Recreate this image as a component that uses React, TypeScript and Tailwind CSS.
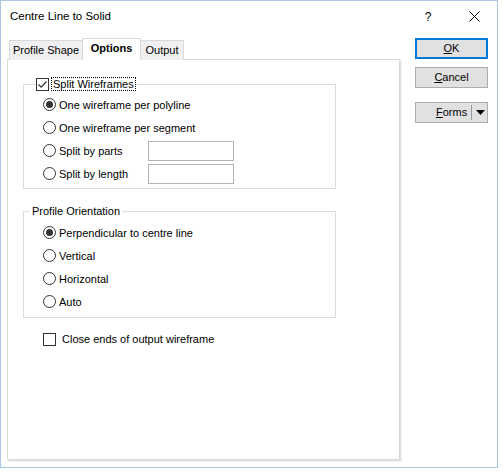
import type { ReactNode } from 'react';

function Radio({ checked }: { checked?: boolean }) {
  return (
    <span className="flex h-[13px] w-[13px] shrink-0 items-center justify-center rounded-full border border-[#333333] bg-white">
      {checked && <span className="h-[7px] w-[7px] rounded-full bg-[#333333]" />}
    </span>
  );
}

function Checkbox({ checked }: { checked?: boolean }) {
  return (
    <span className="flex h-[13px] w-[13px] shrink-0 items-center justify-center border border-[#333333] bg-white">
      {checked && (
        <svg width="11" height="11" viewBox="0 0 11 11">
          <path d="M1.5 5.5 L4.2 8.2 L9.5 2.5" fill="none" stroke="#333333" strokeWidth="1.2" />
        </svg>
      )}
    </span>
  );
}

function RadioRow({ label, checked, children }: { label: string; checked?: boolean; children?: ReactNode }) {
  return (
    <div className="flex h-[23px] items-center">
      <div className="flex min-w-[105px] items-center gap-[3px]">
        <Radio checked={checked} />
        <span className="whitespace-nowrap leading-[14px]">{label}</span>
      </div>
      {children}
    </div>
  );
}

function TextBox() {
  return <div className="h-[20px] w-[86px] border border-[#b4b4b4] bg-white" />;
}

function Tab({ label, active, className }: { label: string; active?: boolean; className: string }) {
  return (
    <div
      className={
        active
          ? `flex h-[22px] items-center justify-center border-x border-t border-[#d9d9d9] bg-white pb-[2px] font-bold ${className}`
          : `flex h-[20px] items-center justify-center border-t border-[#d9d9d9] bg-[#f0f0f0] ${className}`
      }
    >
      {label}
    </div>
  );
}

function Button({ children, primary }: { children: ReactNode; primary?: boolean }) {
  return (
    <div
      className={
        primary
          ? 'flex h-[21px] w-[73px] items-center justify-center border-2 border-[#0078d7] bg-[#e1e1e1]'
          : 'flex h-[21px] w-[73px] items-center justify-center border border-[#adadad] bg-[#e1e1e1]'
      }
    >
      {children}
    </div>
  );
}

export default function App() {
  return (
    <div className="h-[475px] w-[503px] bg-white font-['Liberation_Sans',Arial,sans-serif] text-[11px] text-black">
      <div className="flex h-[468px] w-[498px] flex-col border border-[#a8c8ea]">
        {/* title bar */}
        <div className="flex h-[31px] items-center">
          <span className="pl-[9px] text-[11.5px]">Centre Line to Solid</span>
          <div className="ml-auto flex h-full">
            <div className="flex w-[46px] items-center justify-center text-[12px]">?</div>
            <div className="flex w-[46px] items-center justify-center">
              <svg width="11" height="11" viewBox="0 0 11 11">
                <path d="M0.5 0.5 L10.5 10.5 M10.5 0.5 L0.5 10.5" stroke="#000" strokeWidth="1" />
              </svg>
            </div>
          </div>
        </div>

        <div className="flex pl-[6px] pt-[6px]">
          {/* left: tabs + panel */}
          <div className="flex w-[395px] flex-col">
            <div className="relative z-10 -mb-px flex h-[22px] items-start pl-[2px]">
              <Tab label="Profile Shape" className="mt-[2px] w-[73px] border-l" />
              <Tab label="Options" active className="w-[59px]" />
              <Tab label="Output" className="mt-[2px] w-[43px] border-r" />
            </div>
            <div className="h-[401px] w-[393px] border border-[#d9d9d9] bg-white pl-[15px] pt-[17px] shadow-[1px_1px_0_#e3e3e3,2px_2px_0_#efefef]">
              <fieldset className="w-[313px] border border-[#dcdcdc] pb-[3px]">
                <legend className="ml-[12px] pr-[1px]">
                  <span className="flex h-[14px] items-center">
                    <Checkbox checked />
                    <span className="ml-[2px] border border-dotted border-black px-[1px] leading-[12px]">Split Wireframes</span>
                  </span>
                </legend>
                <div className="pl-[19px] pt-[2px]">
                  <RadioRow label="One wireframe per polyline" checked />
                  <RadioRow label="One wireframe per segment" />
                  <RadioRow label="Split by parts">
                    <TextBox />
                  </RadioRow>
                  <RadioRow label="Split by length">
                    <TextBox />
                  </RadioRow>
                </div>
              </fieldset>

              <fieldset className="mt-[15px] w-[313px] border border-[#dcdcdc] pb-[4px]">
                <legend className="ml-[6px] px-[2px] leading-[14px]">Profile Orientation</legend>
                <div className="pl-[19px] pt-[3px]">
                  <RadioRow label="Perpendicular to centre line" checked />
                  <RadioRow label="Vertical" />
                  <RadioRow label="Horizontal" />
                  <RadioRow label="Auto" />
                </div>
              </fieldset>

              <div className="mt-[14px] flex items-center gap-[6px] pl-[20px]">
                <Checkbox />
                <span className="leading-[14px]">Close ends of output wireframe</span>
              </div>
            </div>
          </div>

          {/* right: buttons */}
          <div className="ml-[13px] flex flex-col">
            <Button primary>
              <span>
                <span className="underline">O</span>K
              </span>
            </Button>
            <div className="mt-[8px]">
              <Button>
                <span>
                  <span className="underline">C</span>ancel
                </span>
              </Button>
            </div>
            <div className="mt-[14px]">
              <Button>
                <div className="flex h-full w-full items-center">
                  <span className="ml-[20px]">
                    <span className="underline">F</span>orms
                  </span>
                  <span className="ml-[4px] h-[15px] w-px bg-[#9a9a9a]" />
                  <svg className="ml-[4px]" width="9" height="5" viewBox="0 0 9 5">
                    <path d="M0 0 H9 L4.5 5 Z" fill="#000" />
                  </svg>
                </div>
              </Button>
            </div>
          </div>
        </div>
      </div>
    </div>
  );
}
